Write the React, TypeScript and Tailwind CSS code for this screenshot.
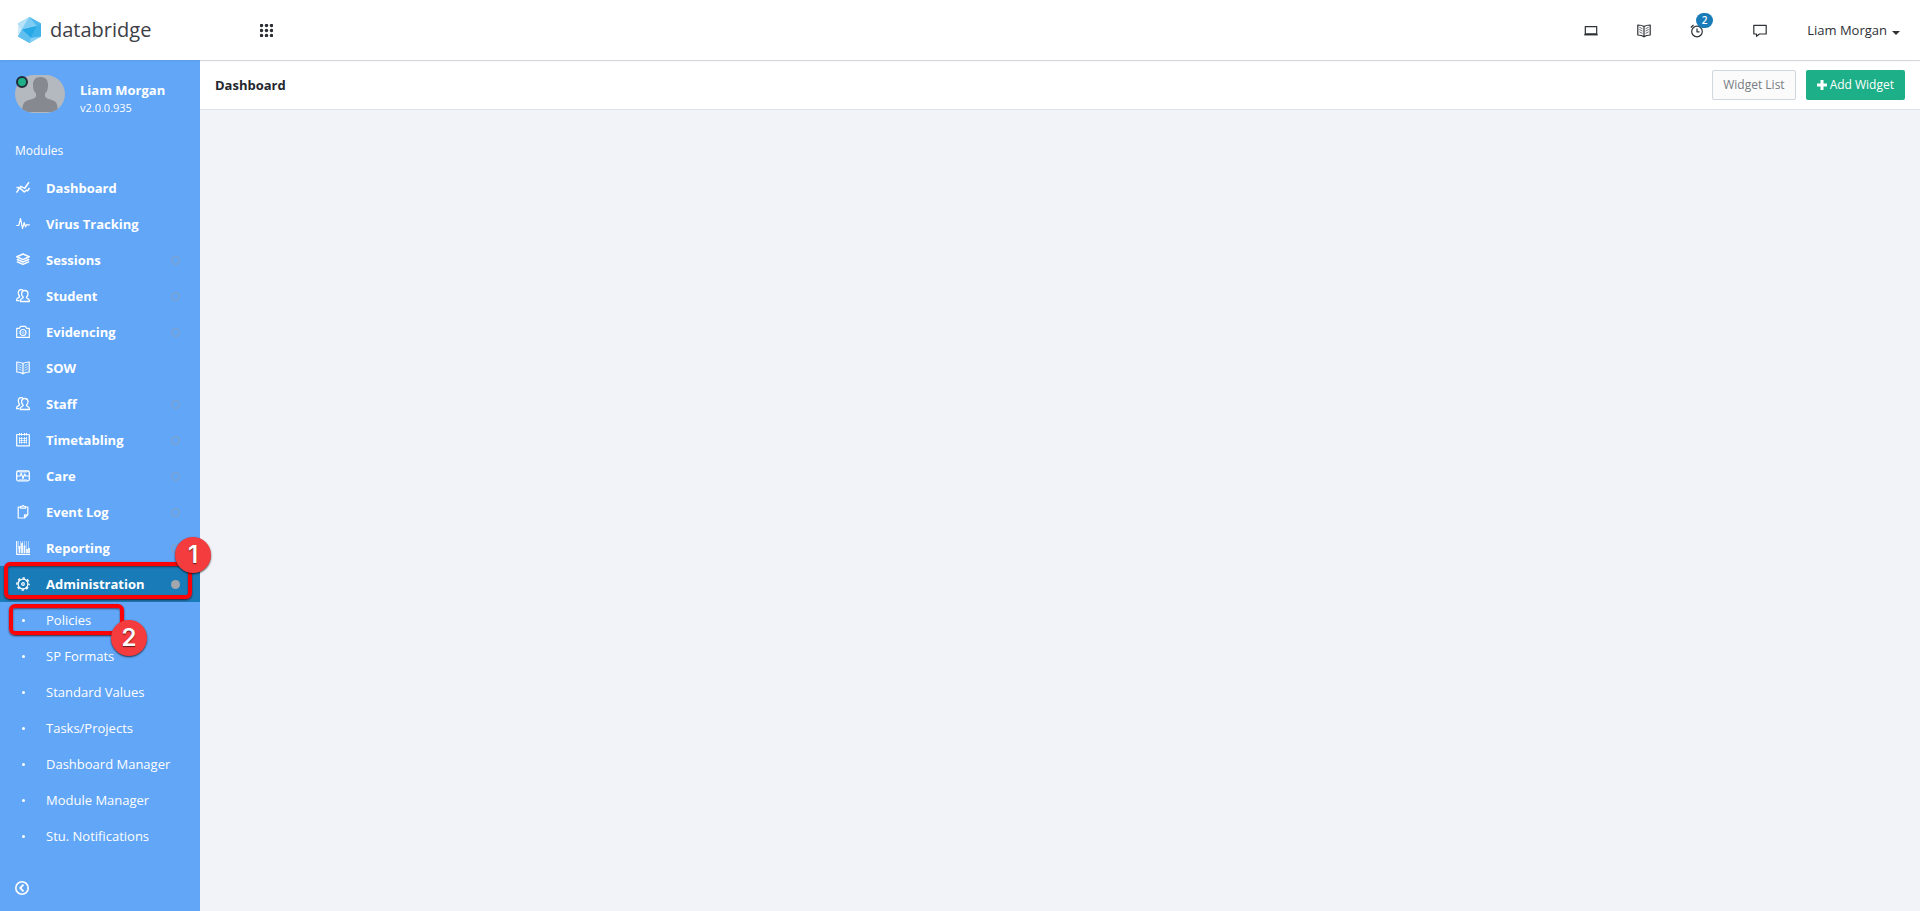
import type { ReactNode } from "react";

interface IconProps {
  children: ReactNode;
  className?: string;
}

const Icon = ({ children, className = "" }: IconProps) => (
  <svg
    aria-hidden="true"
    className={`w-3.5 h-3.5 flex-none ${className}`}
    viewBox="0 0 14 14"
    fill="none"
    stroke="currentColor"
    strokeWidth="1.2"
    strokeLinejoin="round"
  >
    {children}
  </svg>
);

const BookIcon = ({ className }: { className?: string }) => (
  <Icon className={className}>
    <path d="M7 2.500C5.500 1.500 3 1 .8 1v10c2.200 0 4.700.5 6.200 1.800 1.500-1.300 4-1.800 6.200-1.800V1C11 1 8.500 1.500 7 2.500zM7 2.500v10.300" />
    <path d="M2.300 3.200l3.200 1.600M2.300 5.500l3.200 1.600M2.300 7.800l3.200 1.600M11.700 3.200L8.500 4.800M11.700 5.500L8.500 7.100M11.700 7.800L8.500 9.400" strokeWidth="0.7" />
  </Icon>
);

const icons = {
  dashboard: (
    <Icon className="mb-0.5">
      <path d="M.5 11.500l4.200-6.200 4 2L13 1.200M.5 6.500l3 .2 4.800 4.300 2-1.800 1.400.6L13.500 7" strokeWidth="1.500" />
    </Icon>
  ),
  virus: (
    <Icon className="mb-0.5">
      <path d="M.3 8.500h2.500L4.500 1.500l2 10L8.200 5.500l1.300 4.300 1-2h3.200" />
    </Icon>
  ),
  sessions: (
    <Icon className="mb-0.5">
      <path d="M7 1l6.200 2.800L7 6.600.8 3.800zM.8 6.200L7 9l6.200-2.800M.8 8.600L7 11.400l6.200-2.800" strokeWidth="1.500" />
    </Icon>
  ),
  people: (
    <Icon className="mb-0.5">
      <path d="M8.800 1.500c2 0 3.200 1.300 3.200 3.300 0 1.500-.6 2.600-1.500 3.300v.7l2.200 1.400c.5.300.7 1 .7 2.300H4.200c0-1.300.2-2 .7-2.300L7.100 8.800v-.7C6.200 7.400 5.600 6.300 5.600 4.800c0-2 1.200-3.300 3.200-3.300z" strokeWidth="1.300" />
      <path d="M7 1C6.400.700 5.900.600 5.300.600c-1.900 0-3 1.200-3 3.200 0 1.400.4 2.400 1.200 3.200v.9L1.300 9.500C.8 9.900.6 10.600.6 11.600h2.700" strokeWidth="1.300" />
    </Icon>
  ),
  camera: (
    <Icon className="mb-0.5">
      <path d="M.7 3.300h2.500l1.500-2h4.600l1.500 2h2.500v9.100H.7z" />
      <circle cx="7" cy="7.500" r="3" />
      <circle cx="7" cy="7.500" r="1" strokeWidth="0.6" />
    </Icon>
  ),
  book: <BookIcon className="mb-0.5" />,
  calendar: (
    <Icon className="mb-0.5">
      <path d="M.7 1.500h12.600v11.300H.7z" />
      <path d="M3.500 0v2.500M5.500 0v2.500M8.500 0v2.500M10.500 0v2.500" strokeWidth="1" />
      <path d="M3.500 4v6.500M5.500 4v6.500M8.500 4v6.500M10.500 4v6.500M3 5.500h8M3 7.500h8M3 9.500h8" strokeWidth="0.7" />
    </Icon>
  ),
  care: (
    <Icon className="mb-0.5">
      <rect x=".7" y="2" width="12.600" height="9.800" rx="1.500" strokeWidth="1.300" />
      <path d="M1 7h3l1.300-2.800L7 9.500 8.700 5l1 2H13" />
      <path d="M3 3.300h8M3 10.500h8" strokeWidth="0.5" />
    </Icon>
  ),
  clipboard: (
    <Icon className="mb-0.5">
      <path d="M4.500 2H2.200v11h6.300l3.300-3.200V2H9.500M4.500 3.200V1.500l1.400-.2L7 .4l1.100.9 1.400.2v1.700zM8.500 13V9.800h3.300" />
    </Icon>
  ),
  chart: (
    <Icon className="mb-0.5">
      <path d="M.7 0v13.300H14" />
      <path d="M3.500 12V5M6 12V2M8.500 12V4.500M11 12V8M13 12V7" strokeWidth="1.700" />
      <path d="M2 1h12M2 3h12M2 5h12M2 7h12" strokeWidth="0.9" strokeDasharray="1 1" />
    </Icon>
  ),
  gear: (
    <Icon className="mb-0.5">
      <circle cx="7" cy="7" r="4.900" strokeWidth="1.300" />
      <circle cx="7" cy="7" r="6.100" strokeWidth="1.500" strokeDasharray="2.400 2.390" strokeDashoffset="1.200" />
      <circle cx="7" cy="7" r="1.300" />
    </Icon>
  ),
};

interface Module {
  name: string;
  icon: keyof typeof icons;
  marker?: boolean;
}

const modules: Module[] = [
  { name: "Dashboard", icon: "dashboard" },
  { name: "Virus Tracking", icon: "virus" },
  { name: "Sessions", icon: "sessions", marker: true },
  { name: "Student", icon: "people", marker: true },
  { name: "Evidencing", icon: "camera", marker: true },
  { name: "SOW", icon: "book" },
  { name: "Staff", icon: "people", marker: true },
  { name: "Timetabling", icon: "calendar", marker: true },
  { name: "Care", icon: "care", marker: true },
  { name: "Event Log", icon: "clipboard", marker: true },
  { name: "Reporting", icon: "chart", marker: true },
];

const adminPages = [
  "Policies",
  "SP Formats",
  "Standard Values",
  "Tasks/Projects",
  "Dashboard Manager",
  "Module Manager",
  "Stu. Notifications",
];

const Frame = ({ className }: { className: string }) => (
  <span
    className={`absolute z-10 rounded-md border-4 border-[#fb0207] shadow-[0_1px_2px_rgba(60,0,0,0.8),inset_0_1px_2px_rgba(60,0,0,0.6)] pointer-events-none ${className}`}
  />
);

const Step = ({ value, className }: { value: number; className: string }) => (
  <span
    className={`absolute z-20 flex items-center justify-center w-9 h-9 rounded-full bg-[#f43b3e] text-white text-2xl font-semibold font-['Inter',sans-serif] shadow-[0_1px_2px_rgba(0,0,0,0.7)] [text-shadow:0_1px_1px_rgba(0,0,0,0.6)] ${className}`}
  >
    {value}
  </span>
);

const Header = () => (
  <header className="relative z-10 flex items-center h-[60px] bg-white shadow-[0_1px_2px_rgba(0,0,0,0.08)]">
    <a href="#" className="flex items-center w-[200px] pl-[18px] gap-[9px] text-xl text-[#3c4046]">
      <svg aria-hidden="true" className="w-[23px] h-[26px]" viewBox="0 0 23 26">
        <path d="M11.500 0L23 6.500v13L11.500 26 0 19.500v-13z" fill="#55bdf0" />
        <path d="M11.500 0L4 12.500 0 6.500z" fill="#b5e2f9" />
        <path d="M0 6.500l4 6L0 19.500z" fill="#cdebfb" />
        <path d="M11.500 0l7.500 9L4 12.500z" fill="#7fcdf4" />
        <path d="M11.500 0L23 6.500 19 9z" fill="#50b8ec" />
        <path d="M19 9L4 12.500 13 21z" fill="#27a9e8" />
        <path d="M4 12.500L13 21l-1.500 5L0 19.500z" fill="#62c0f0" />
        <path d="M19 9l4-2.500v13L13 21z" fill="#3fb2ea" />
        <path d="M23 19.500L11.500 26l1.500-5z" fill="#86d0f5" />
      </svg>
      databridge
    </a>
    <button type="button" aria-label="Apps" className="ml-[60px] text-[#2a2d33]">
      <svg className="w-[13px] h-[13px]" viewBox="0 0 13 13" fill="currentColor">
        {[1.5, 6.5, 11.5].map((y) =>
          [1.5, 6.5, 11.5].map((x) => <circle key={`${x}-${y}`} cx={x} cy={y} r="1.7" />)
        )}
      </svg>
    </button>
    <div className="flex items-center ml-auto pt-0.5 pr-5 text-[#2d3035]">
      <button type="button" aria-label="Screen" className="mr-[39px]">
        <Icon>
          <path d="M1.300 2.600h11.400v7.200H1.300z" />
          <path d="M.3 10.700h13.400" strokeWidth="1.500" />
        </Icon>
      </button>
      <button type="button" aria-label="Library" className="mr-[39px]">
        <BookIcon />
      </button>
      <button type="button" aria-label="Reminders" className="relative mr-[49px]">
        <Icon>
          <circle cx="7" cy="7.500" r="5.300" />
          <path d="M7 4.500v3.300h2.500M.8 3.500L3.500 1M13.200 3.500L10.500 1" />
        </Icon>
        <span className="absolute -top-[11px] left-1.5 w-[17px] h-[15px] rounded-full bg-[#1a7bb9] text-white text-[10px] leading-[15px] font-semibold text-center">
          2
        </span>
      </button>
      <button type="button" aria-label="Messages" className="mr-10">
        <Icon>
          <path d="M.8 1.300h12.400v8.700H6.500l-3 2.300V10H.8z" />
        </Icon>
      </button>
      <button type="button" className="flex items-center gap-[5px]">
        Liam Morgan
        <span className="mt-1 border-x-4 border-t-4 border-x-transparent border-t-current" />
      </button>
    </div>
  </header>
);

const Sidebar = () => (
  <aside className="flex-none flex flex-col w-[200px] bg-[#62a6f7] text-white">
    <div className="flex h-[75px] pt-[15px] pl-[15px] gap-[15px]">
      <div className="relative flex-none w-[50px] h-[38px]">
        <svg aria-hidden="true" className="w-full h-full rounded-[19px]" viewBox="0 0 50 38">
          <path d="M0 0h50v38H0z" fill="#b4b8bf" />
          <path d="M25.500 2c5 0 7.500 3 7.500 7.500 0 5-1 7-3 9v3c1 2 4 2.500 8 4 4 1.500 4.500 4 5 11.500H7c.5-7.500 1.500-10 5.500-11.500 4.500-1.500 7.500-2 8.500-4v-3c-2-2-3-4-3-9C18 5 20.500 2 25.500 2z" fill="#868a90" />
        </svg>
        <span className="absolute top-px left-px w-3 h-3 rounded-full border-2 border-[#222b38] bg-[#1caf88]" />
      </div>
      <div className="pt-[5px]">
        <div className="font-bold leading-5">Liam Morgan</div>
        <div className="text-[11px] leading-4">v2.0.0.935</div>
      </div>
    </div>
    <h2 className="h-[35px] pl-[15px] pt-1.5 text-xs leading-5">Modules</h2>
    <nav>
      <ul>
        {modules.map((item) => (
          <li key={item.name}>
            <a href="#" className="flex items-center h-9 pt-0.5 pl-4 pr-5 gap-4 font-bold">
              {icons[item.icon]}
              {item.name}
              {item.marker && (
                <span className="ml-auto w-[9px] h-[9px] mb-px rounded-full border border-[#869fbe]" />
              )}
            </a>
          </li>
        ))}
        <li className="relative">
          <a href="#" className="flex items-center h-9 pt-0.5 pl-4 pr-5 gap-4 font-bold bg-[#1a7bb9]">
            {icons.gear}
            Administration
            <span className="ml-auto w-[9px] h-[9px] mb-px rounded-full bg-[#a3a6ab]" />
          </a>
          <Frame className="-top-1 left-1 w-[188px] h-[37px]" />
          <Step value={1} className="-top-[29px] left-[175px]" />
        </li>
        {adminPages.map((name, i) => (
          <li key={name} className="relative">
            <a href="#" className="flex items-center h-9 pt-0.5 pl-4 gap-4">
              <span className="flex justify-center w-3.5 mb-0.5">
                <span className="w-[3px] h-[3px] rounded-full bg-white" />
              </span>
              {name}
            </a>
            {i === 0 && (
              <>
                <Frame className="top-0.5 left-[9px] w-[115px] h-[31px]" />
                <Step value={2} className="top-[18px] left-[111px]" />
              </>
            )}
          </li>
        ))}
      </ul>
    </nav>
    <button type="button" aria-label="Collapse menu" className="mt-auto mb-4 ml-[15px] w-3.5 h-3.5">
      <Icon>
        <circle cx="7" cy="7" r="6.200" strokeWidth="1.600" />
        <path d="M8.500 3.700L5.200 7l3.300 3.300" strokeWidth="1.900" />
      </Icon>
    </button>
  </aside>
);

const App = () => (
  <div className="flex flex-col min-h-screen bg-[#f2f3f8] text-[13px] font-['Open_Sans',sans-serif]">
    <Header />
    <div className="grow flex">
      <Sidebar />
      <main className="grow">
        <div className="flex items-center h-[50px] px-[15px] bg-white border-y border-[#dfe3e8]">
          <h1 className="pt-0.5 font-bold text-[#24272e]">Dashboard</h1>
          <div className="flex gap-2.5 ml-auto text-xs">
            <button type="button" className="h-[30px] px-2.5 rounded-xs border border-[#cfd6de] bg-[#fbfbfc] text-[#777b82]">
              Widget List
            </button>
            <button type="button" className="flex items-center gap-[3px] h-[30px] px-[11px] rounded-xs bg-[#1caf88] text-white">
              <svg aria-hidden="true" className="w-2.5 h-2.5" viewBox="0 0 10 10" fill="currentColor">
                <path d="M3.500 0h3v3.500H10v3H6.500V10h-3V6.500H0v-3h3.500z" />
              </svg>
              Add Widget
            </button>
          </div>
        </div>
      </main>
    </div>
  </div>
);

export default App;
